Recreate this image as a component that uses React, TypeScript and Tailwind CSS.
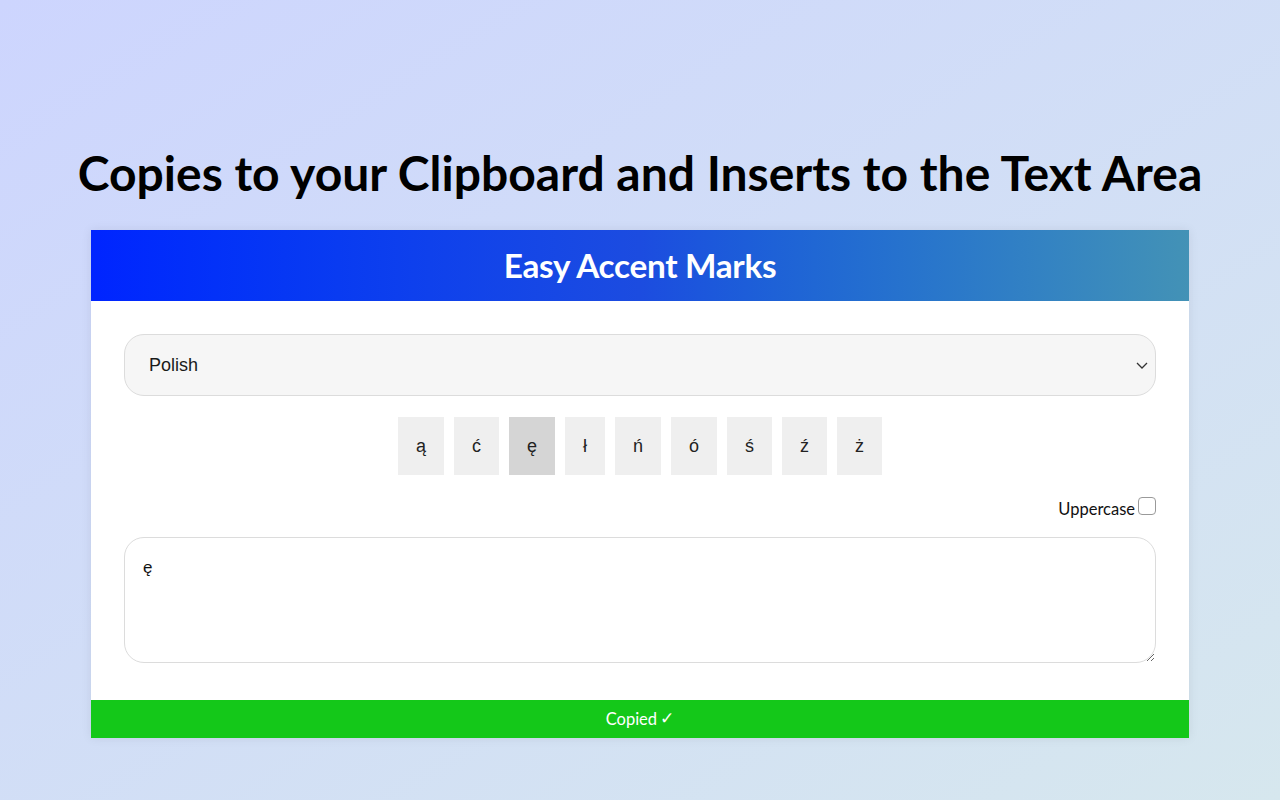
import { useState } from "react";

const letters = ["ą", "ć", "ę", "ł", "ń", "ó", "ś", "ź", "ż"];

const App = () => {
  const [active, setActive] = useState("ę");
  const [text, setText] = useState("ę");
  const [upper, setUpper] = useState(false);

  return (
    <div className="min-h-screen w-full bg-gradient-to-br from-[#cdd5fe] to-[#d6e7ee] flex flex-col items-center font-['Lato',sans-serif]">
      <h1 className="mt-[140px] text-[48px] leading-[66px] font-bold text-black">
        Copies to your Clipboard and Inserts to the Text Area
      </h1>

      {/* card */}
      <div className="mt-[24px] w-[1098px] bg-white shadow-[0_0_10px_rgba(0,0,0,0.08)]">
        <div className="h-[71px] flex items-center justify-center bg-gradient-to-r from-[#0024ff] via-[#1c4ce0] to-[#4392b6]">
          <h2 className="text-white text-[33.3px] font-bold tracking-[-0.3px]">Easy Accent Marks</h2>
        </div>

        <div className="px-[33px] pt-[33px] pb-[37px] flex flex-col">
          <div className="relative">
            <select className="appearance-none w-full h-[62px] rounded-[20px] bg-[#f6f6f6] border border-[#dcdcdc] pl-[24px] text-[18px] text-[#1a1a1a] font-['Liberation_Sans',Arial,sans-serif] outline-none">
              <option>Polish</option>
            </select>
            <svg
              className="absolute right-[7px] top-[24px] pointer-events-none"
              width="14"
              height="14"
              viewBox="0 0 14 14"
              fill="none"
              stroke="#333"
              strokeWidth="1.3"
            >
              <path d="M2 5l5 5 5-5" />
            </svg>
          </div>

          <div className="mt-[21px] flex justify-center gap-[10px]">
            {letters.map((l) => (
              <button
                key={l}
                onClick={() => {
                  setActive(l);
                  setText(upper ? l.toUpperCase() : l);
                }}
                className={
                  "h-[58px] px-[18px] text-[18px] text-[#222] font-['Liberation_Sans',Arial,sans-serif] " +
                  (active === l ? "bg-[#d5d5d5]" : "bg-[#efefef]")
                }
              >
                {upper ? l.toUpperCase() : l}
              </button>
            ))}
          </div>

          <div className="mt-[22px] flex justify-end items-start">
            <span className="text-[16.5px] leading-[24px] text-[#111]">Uppercase</span>
            <input
              type="checkbox"
              checked={upper}
              onChange={(e) => setUpper(e.target.checked)}
              className="appearance-none w-[18px] h-[18px] border border-[#9a9a9a] rounded-[4px] bg-white ml-[3px]"
            />
          </div>

          <textarea
            value={text}
            onChange={(e) => setText(e.target.value)}
            className="mt-[16px] w-full h-[126px] rounded-[20px] border border-[#dcdcdc] px-[18px] py-[17px] text-[17px] text-[#111] font-['Liberation_Sans',Arial,sans-serif] outline-none"
          />
        </div>

        <div className="h-[38px] bg-[#14c819] flex items-center justify-center text-white text-[16.5px]">
          Copied <span className="ml-[3px] font-['DejaVu_Sans',sans-serif] font-bold text-[17px]">✓</span>
        </div>
      </div>
    </div>
  );
};

export default App;
